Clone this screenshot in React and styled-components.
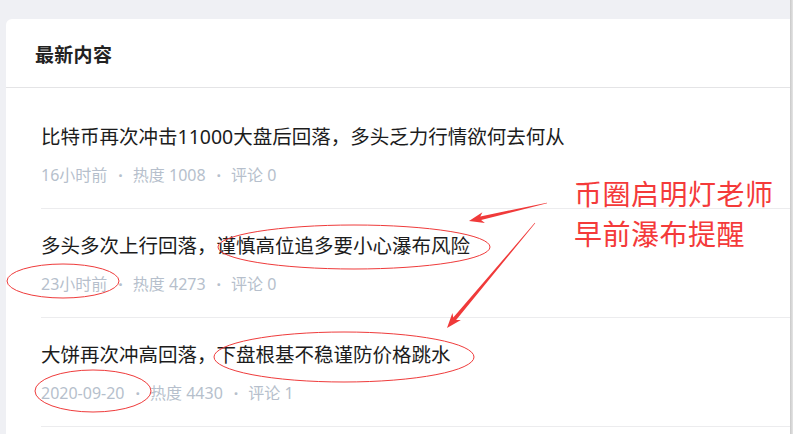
import React from "react";
import styled, { createGlobalStyle } from "styled-components";

const Global = createGlobalStyle`
  html, body { margin: 0; padding: 0; }
  body {
    background: #eff0f4;
    font-family: "Noto Sans CJK SC", "Noto Sans", sans-serif;
    overflow: hidden;
  }
`;

const Page = styled.div`
  position: relative;
  width: 793px;
  height: 434px;
  display: flex;
  padding: 19px 0 0 6px;
  box-sizing: border-box;
  overflow: hidden;
`;

const Card = styled.section`
  flex: 1;
  background: #fff;
  border-radius: 6px 0 0 0;
  display: flex;
  flex-direction: column;
`;

const Edge = styled.div`
  width: 3px;
  margin-top: -19px;
  background: linear-gradient(to right, #c9c9c9, #e6e6e6);
`;

const Header = styled.header`
  height: 68px;
  display: flex;
  align-items: center;
  padding: 0 0 0 29px;
  border-bottom: 1px solid #e4e4e6;
  font-size: 19px;
  font-weight: 700;
  color: #222;
  letter-spacing: 0.3px;
`;

const List = styled.ul`
  list-style: none;
  margin: 0;
  padding: 12px 0 0 35px;
`;

const Item = styled.li`
  padding: 24px 0 22px;
  border-bottom: 1px solid #ececee;
`;

const Title = styled.div`
  font-family: "Noto Sans", "Noto Sans CJK SC", sans-serif;
  font-size: 19.5px;
  line-height: 26px;
  color: #1c1c1c;
  white-space: nowrap;
`;

const Meta = styled.div`
  margin-top: 14px;
  display: flex;
  align-items: center;
  font-family: "Noto Sans", "Noto Sans CJK SC", sans-serif;
  font-size: 16px;
  line-height: 22px;
  color: #b6bfcc;
  white-space: nowrap;
`;

const Dot = styled.span`
  margin: 0 10px 0 11px;
  font-weight: 700;
`;

const Note = styled.div`
  position: absolute;
  left: 574px;
  top: 173px;
  font-size: 28px;
  line-height: 40px;
  color: #f43a3a;
  letter-spacing: 0.5px;
`;

const Overlay = styled.svg`
  position: absolute;
  left: 0;
  top: 0;
  pointer-events: none;
`;

const items = [
  { title: "比特币再次冲击11000大盘后回落，多头乏力行情欲何去何从", time: "16小时前", heat: "1008", comments: "0" },
  { title: "多头多次上行回落，谨慎高位追多要小心瀑布风险", time: "23小时前", heat: "4273", comments: "0" },
  { title: "大饼再次冲高回落，下盘根基不稳谨防价格跳水", time: "2020-09-20", heat: "4430", comments: "1" },
];

function arrowPoints(tx, ty, px, py, headLen = 15, headHalf = 5.5, tailHalf = 0.3, neckHalf = 1.8) {
  const dx = px - tx;
  const dy = py - ty;
  const len = Math.hypot(dx, dy);
  const ux = dx / len;
  const uy = dy / len;
  const nx = -uy;
  const ny = ux;
  const bx = px - ux * headLen;
  const by = py - uy * headLen;
  const pts = [
    [tx + nx * tailHalf, ty + ny * tailHalf],
    [bx + ux * 3 + nx * neckHalf, by + uy * 3 + ny * neckHalf],
    [bx + nx * headHalf, by + ny * headHalf],
    [px, py],
    [bx - nx * headHalf, by - ny * headHalf],
    [bx + ux * 3 - nx * neckHalf, by + uy * 3 - ny * neckHalf],
    [tx - nx * tailHalf, ty - ny * tailHalf],
  ];
  return pts.map((p) => p.map((v) => v.toFixed(1)).join(",")).join(" ");
}

export default function App() {
  return (
    <>
      <Global />
      <Page>
        <Card>
          <Header>最新内容</Header>
          <List>
            {items.map((it) => (
              <Item key={it.title}>
                <Title>{it.title}</Title>
                <Meta>
                  <span>{it.time}</span>
                  <Dot>·</Dot>
                  <span>热度 {it.heat}</span>
                  <Dot>·</Dot>
                  <span>评论 {it.comments}</span>
                </Meta>
              </Item>
            ))}
          </List>
        </Card>
        <Edge />
        <Note>
          币圈启明灯老师
          <br />
          早前瀑布提醒
        </Note>
        <Overlay width="793" height="434" viewBox="0 0 793 434">
          <g fill="none" stroke="#ef3b3b" strokeWidth="1">
            <ellipse cx="354" cy="247" rx="136" ry="22" />
            <ellipse cx="63" cy="281" rx="56" ry="17" />
            <ellipse cx="344" cy="357" rx="130" ry="25" />
            <ellipse cx="93" cy="391" rx="58" ry="21" />
          </g>
          <g fill="#f03a3a">
            <polygon points={arrowPoints(547, 203, 469, 221)} />
            <polygon points={arrowPoints(535, 223, 447, 328)} />
          </g>
        </Overlay>
      </Page>
    </>
  );
}
